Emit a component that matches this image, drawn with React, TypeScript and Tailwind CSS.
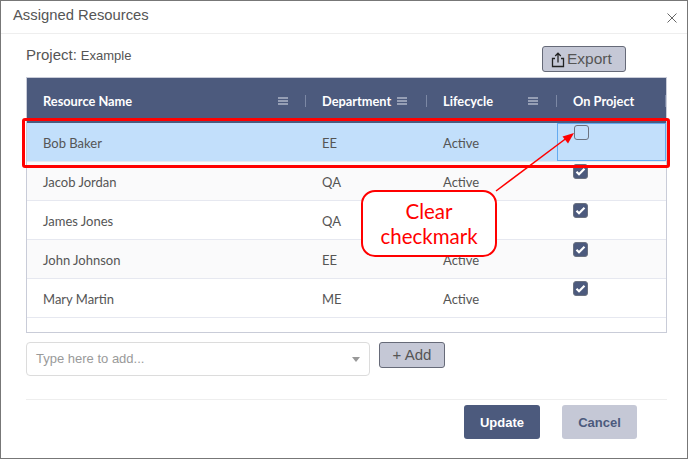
const rows = [
  { name: "Bob Baker", dept: "EE", checked: false },
  { name: "Jacob Jordan", dept: "QA", checked: true },
  { name: "James Jones", dept: "QA", checked: true },
  { name: "John Johnson", dept: "EE", checked: true },
  { name: "Mary Martin", dept: "ME", checked: true },
];

const cols = "grid grid-cols-[279px_121px_130px_1fr]";

const MenuIcon = () => (
  <svg width="12" height="8" viewBox="0 0 12 8" className="shrink-0">
    <path d="M1 1h10M1 4h10M1 7h10" stroke="#dfe3ee" strokeWidth="1.2" />
  </svg>
);

const HeaderCell = ({ label, menu, gap }: { label: string; menu?: boolean; gap: string }) => (
  <div className="flex h-full items-center pl-4 pr-[18px] relative">
    <span className="mt-[2px] font-bold text-[12.8px] text-white">{label}</span>
    {menu && <span className={gap}><MenuIcon /></span>}
    <span className="absolute right-0 top-[17px] h-3 w-px bg-[#7c88a5]" />
  </div>
);

const Checkbox = ({ checked }: { checked: boolean }) =>
  checked ? (
    <div className="flex h-[15px] w-[15px] items-center justify-center rounded-[3px] border border-[#6b7280] bg-[#4c5a7d]">
      <svg width="11" height="9" viewBox="0 0 11 9">
        <path d="M1.5 4.8 4 7.2 9.5 1.8" fill="none" stroke="white" strokeWidth="2.2" />
      </svg>
    </div>
  ) : (
    <div className="h-[15px] w-[15px] rounded-[3px] border border-[#6b7280] bg-[#c2dffb]" />
  );

export default function App() {
  return (
    <div className="relative h-[459px] w-[688px] overflow-hidden border border-[#777777] bg-white font-['Liberation_Sans',sans-serif] text-[#555555]">
      <div className="flex h-[33px] items-center justify-between border-b border-[#eeeeee] pl-3 pr-[10px]">
        <span className="mb-1 text-[14.8px]">Assigned Resources</span>
        <svg width="10" height="10" viewBox="0 0 10 10" className="mt-0.5">
          <path d="M.5.5l9 9M9.5.5l-9 9" stroke="#666666" strokeWidth="1" />
        </svg>
      </div>

      <div className="pl-[25px] pr-5">
        <div className="flex h-[43px] items-center justify-between">
          <div className="mt-[-1px] flex items-baseline gap-[4px]">
            <span className="text-[15px]">Project:</span>
            <span className="text-[13px]">Example</span>
          </div>
          <button className="mr-[41px] mt-[6px] flex h-[26px] w-[84px] items-center rounded-[3px] border border-[#666a78] bg-[#c5c8d6] pl-2 text-[15.5px] text-[#555555]">
            <svg width="14" height="16" viewBox="0 0 14 16" className="mr-[2px] mt-0.5">
              <path d="M4 6.5H1.5v8h11v-8H10M7 10.5V1.5M4.2 4 7 1.2 9.8 4" fill="none" stroke="#222222" strokeWidth="1.3" />
            </svg>
            Export
          </button>
        </div>

        <div className="h-[256px] w-[641px] border border-[#c9ccd8] font-['Lato',sans-serif]">
          <div className={`${cols} h-[45px] bg-[#4c5a7d]`}>
            <HeaderCell label="Resource Name" menu gap="ml-auto mr-[-1px]" />
            <HeaderCell label="Department" menu gap="ml-[5px]" />
            <HeaderCell label="Lifecycle" menu gap="ml-auto" />
            <HeaderCell label="On Project" gap="" />
          </div>
          {rows.map((row, i) => (
            <div
              key={row.name}
              className={`${cols} h-[39px] border-b border-[#e6e8f0] text-[13px] text-[#555555] ${
                i === 0 ? "bg-[#c2dffb]" : i % 2 === 1 ? "bg-[#fafafb]" : "bg-white"
              }`}
            >
              <div className="flex items-center pl-4 pt-1">{row.name}</div>
              <div className="flex items-center pl-4 pt-1">{row.dept}</div>
              <div className="flex items-center pl-4 pt-1">Active</div>
              <div className={`pl-4 ${i === 0 ? "border border-[#64aaf0] pt-[1px]" : "pt-[2px]"}`}>
                <Checkbox checked={row.checked} />
              </div>
            </div>
          ))}
        </div>

        <div className="mt-[9px] flex items-start gap-[9px]">
          <div className="flex h-[34px] w-[344px] items-center justify-between rounded-[4px] border border-[#dcdcdc] pl-[9px] pr-[9px] text-[13px] text-[#9a9a9a]">
            <span>Type here to add...</span>
            <span className="h-0 w-0 border-x-[4.5px] border-t-[5px] border-x-transparent border-t-[#999999]" />
          </div>
          <button className="h-[26px] w-[66px] rounded-[3px] border border-[#666a78] bg-[#c5c8d6] text-[15px] text-[#555555]">
            + Add
          </button>
        </div>

        <div className="mt-[23px] flex h-[40px] w-[641px] items-end justify-end gap-[22px] border-t border-[#eeeeee] pr-[30px]">
          <button className="h-[34px] w-[76px] rounded-[3px] bg-[#4c5a7d] pt-[2px] text-[13px] font-bold text-white">
            Update
          </button>
          <button className="h-[34px] w-[75px] rounded-[3px] bg-[#c5c8d6] pt-[2px] text-[13px] font-bold text-[#4c5a7d]">
            Cancel
          </button>
        </div>
      </div>

      {/* annotations drawn over the dialog */}
      <div className="absolute left-[21px] top-[117px] h-[50px] w-[648px] rounded-[3px] border-[3px] border-[#ff0000]" />
      <svg width="90" height="70" viewBox="0 0 90 70" className="absolute left-[489px] top-[128px]">
        <path d="M6 62 78 8" stroke="#ff0000" strokeWidth="1.5" />
        <path d="M84 4 72.5 7.5 78 14.5Z" fill="#ff0000" />
      </svg>
      <div className="absolute left-[360px] top-[189px] flex h-[67px] w-[136px] items-center justify-center rounded-[14px] border-2 border-[#ff0000] bg-white text-center font-['Lato',sans-serif] text-[20.5px] leading-[25px] text-[#ff0000]">
        Clear
        <br />
        checkmark
      </div>
    </div>
  );
}
